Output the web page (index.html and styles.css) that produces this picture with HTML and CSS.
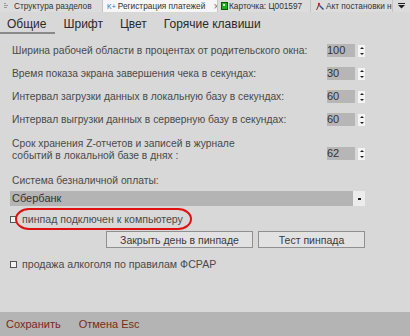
FILE: index.html
```html
<!DOCTYPE html>
<html lang="ru">
<head>
<meta charset="utf-8">
<link rel="stylesheet" href="styles.css">
</head>
<body>
<div class="app">
  <div class="doc-tabs">
    <div class="doc-tab t1">
      <svg class="ico" width="7" height="8" viewBox="0 0 7 8"><rect x="1" y="1" width="2" height="1" fill="#999"/><rect x="1" y="3" width="4" height="1" fill="#999"/><rect x="1" y="5" width="3" height="1" fill="#999"/></svg>
      <span>Структура разделов</span>
    </div>
    <div class="doc-tab t2">
      <span class="kplus">K+</span>
      <span>Регистрация платежей</span>
      <span class="close">×</span>
    </div>
    <div class="doc-tab t3">
      <svg class="ico" width="7" height="8" viewBox="0 0 7 8"><rect x="0.5" y="0.5" width="6" height="7" fill="#1fb01f" stroke="#0a5a0a"/><rect x="2" y="2" width="2" height="2" fill="#d8f0d0"/></svg>
      <span>Карточка: Ц001597</span>
    </div>
    <div class="doc-tab t4">
      <svg class="ico" width="9" height="8" viewBox="0 0 9 8"><path d="M1 8 L4 1 L5 2 L2 8 Z" fill="#8a3a2a"/><path d="M5 3 L9 7 L8 8 L4 4 Z" fill="#2a4a9a"/><circle cx="4" cy="2" r="1.2" fill="#c03020"/></svg>
      <span>Акт постановки н</span>
    </div>
    <div class="doc-more">
      <svg width="7" height="6" viewBox="0 0 7 6"><rect x="0" y="0" width="7" height="1" fill="#222"/><path d="M0 2 L7 2 L3.5 5.5 Z" fill="#222"/></svg>
    </div>
  </div>

  <div class="sub-tabs">
    <div class="sub-tab active">Общие</div>
    <div class="sub-tab">Шрифт</div>
    <div class="sub-tab">Цвет</div>
    <div class="sub-tab">Горячие клавиши</div>
  </div>

  <div class="form">
    <div class="row">
      <div class="label">Ширина рабочей области в процентах от родительского окна:</div>
      <div class="spin"><div class="spin-val">100</div><div class="spin-btns"><span class="up"></span><span class="down"></span></div></div>
    </div>
    <div class="row">
      <div class="label">Время показа экрана завершения чека в секундах:</div>
      <div class="spin"><div class="spin-val">30</div><div class="spin-btns"><span class="up"></span><span class="down"></span></div></div>
    </div>
    <div class="row">
      <div class="label">Интервал загрузки данных в локальную базу в секундах:</div>
      <div class="spin"><div class="spin-val">60</div><div class="spin-btns"><span class="up"></span><span class="down"></span></div></div>
    </div>
    <div class="row">
      <div class="label">Интервал выгрузки данных в серверную базу в секундах:</div>
      <div class="spin"><div class="spin-val">60</div><div class="spin-btns"><span class="up"></span><span class="down"></span></div></div>
    </div>
    <div class="row tall">
      <div class="label">Срок хранения Z-отчетов и записей в журнале<br>событий в локальной базе в днях :</div>
      <div class="spin"><div class="spin-val">62</div><div class="spin-btns"><span class="up"></span><span class="down"></span></div></div>
    </div>

    <div class="pay-label">Система безналичной оплаты:</div>
    <div class="combo">
      <div class="combo-val">Сбербанк</div>
      <div class="combo-btn"><span></span></div>
    </div>

    <div class="check-row pinpad">
      <span class="box"></span>
      <span>пинпад подключен к компьютеру</span>
      <span class="circle"></span>
    </div>

    <div class="buttons">
      <div class="btn wide">Закрыть день в пинпаде</div>
      <div class="btn">Тест пинпада</div>
    </div>

    <div class="check-row alco">
      <span class="box"></span>
      <span>продажа алкоголя по правилам ФСРАР</span>
    </div>
  </div>

  <div class="footer">
    <span class="link">Сохранить</span>
    <span class="link">Отмена Esc</span>
  </div>
</div>
</body>
</html>
```

FILE: styles.css
```css
* { box-sizing: border-box; }
html, body { margin: 0; padding: 0; }
body {
  width: 410px;
  height: 336px;
  overflow: hidden;
  background: #d8d8d8;
  font-family: "Liberation Sans", Arial, sans-serif;
  color: #4a4a4a;
}
.app {
  display: flex;
  flex-direction: column;
  height: 336px;
}
.doc-tabs {
  display: flex;
  height: 12px;
  background: #dcdcdc;
  font-size: 8.3px;
  color: #333;
  align-items: stretch;
}
.doc-tab {
  display: flex;
  align-items: center;
  white-space: nowrap;
  overflow: hidden;
  border-right: 1px solid #c4c4c4;
}
.t1 { width: 103px; padding-left: 3px; gap: 4px; }
.t2 { width: 115px; padding-left: 4px; gap: 2px; background: #f6f6f6; }
.t2 .close { margin-left: 6px; color: #777; font-size: 10px; }
.kplus { color: #3a6ab0; font-size: 7px; }
.t3 { width: 93px; padding-left: 3px; gap: 1px; }
.t4 { width: 82px; padding-left: 4px; gap: 2px; }
.doc-more { flex: 1; display: flex; align-items: center; justify-content: center; }

.sub-tabs {
  display: flex;
  height: 24px;
  gap: 17px;
  font-size: 12px;
  color: #2a2a2a;
}
.sub-tab { padding-top: 5px; }
.sub-tab.active {
  border-bottom: 2px solid #8a8a8a;
  padding: 5px 9px 0 7px;
  margin-right: -9px;
  height: 22px;
}

.form {
  display: flex;
  flex-direction: column;
  padding: 3px 45px 0 12px;
  font-size: 10.3px;
}
.row {
  display: flex;
  justify-content: space-between;
  align-items: center;
  height: 23px;
}
.row.tall { height: 31px; align-items: flex-end; padding-top: 6px; }
.row.tall .label { line-height: 12px; }
.row.tall .spin { margin-bottom: 2px; }
.spin {
  display: flex;
  align-items: center;
  gap: 3px;
  width: 38px;
}
.spin-val {
  width: 28px;
  height: 13px;
  background: #b6b6b6;
  color: #333;
  font-size: 11px;
  line-height: 13px;
}
.spin-btns {
  width: 7px;
  height: 12px;
  background: #f4f4f4;
  display: flex;
  flex-direction: column;
  align-items: center;
  justify-content: space-around;
}
.spin-btns span {
  width: 0; height: 0;
  border-left: 2px solid transparent;
  border-right: 2px solid transparent;
}
.spin-btns .up { border-bottom: 2px solid #222; }
.spin-btns .down { border-top: 2px solid #222; }

.pay-label { margin-top: 12px; line-height: 13px; }
.combo {
  display: flex;
  margin: 4px 0 0 -2px;
  height: 15px;
}
.combo-val {
  flex: 1;
  background: #b4b4b4;
  color: #333;
  line-height: 15px;
  padding-left: 2px;
  font-size: 11px;
}
.combo-btn {
  width: 12px;
  background: #ececec;
  display: flex;
  align-items: center;
  justify-content: center;
}
.combo-btn span { width: 3px; height: 2px; background: #222; }

.check-row {
  display: flex;
  align-items: center;
  gap: 5px;
  position: relative;
  margin-left: -2px;
  height: 12px;
  font-size: 10.6px;
}
.box {
  width: 7px;
  height: 7px;
  border: 1px solid #555;
  background: #f2f2f2;
}
.pinpad { margin-top: 7px; }
.circle {
  position: absolute;
  left: 5px;
  top: -5px;
  width: 177px;
  height: 22px;
  border: 2px solid #e01010;
  border-radius: 14px / 11px;
}
.buttons {
  display: flex;
  justify-content: flex-end;
  gap: 5px;
  margin-top: 6px;
  font-size: 10.5px;
}
.btn {
  height: 17px;
  border: 1px solid #909090;
  background: #e2e2e2;
  display: flex;
  align-items: center;
  justify-content: center;
  color: #3a3a3a;
  width: 107px;
}
.btn.wide { width: 147px; }
.alco { margin-top: 10px; }

.footer {
  margin-top: auto;
  height: 24px;
  background: #b4b4b4;
  display: flex;
  align-items: center;
  gap: 18px;
  padding-left: 6px;
  font-size: 11px;
}
.link { color: #7a2a1a; }
```
